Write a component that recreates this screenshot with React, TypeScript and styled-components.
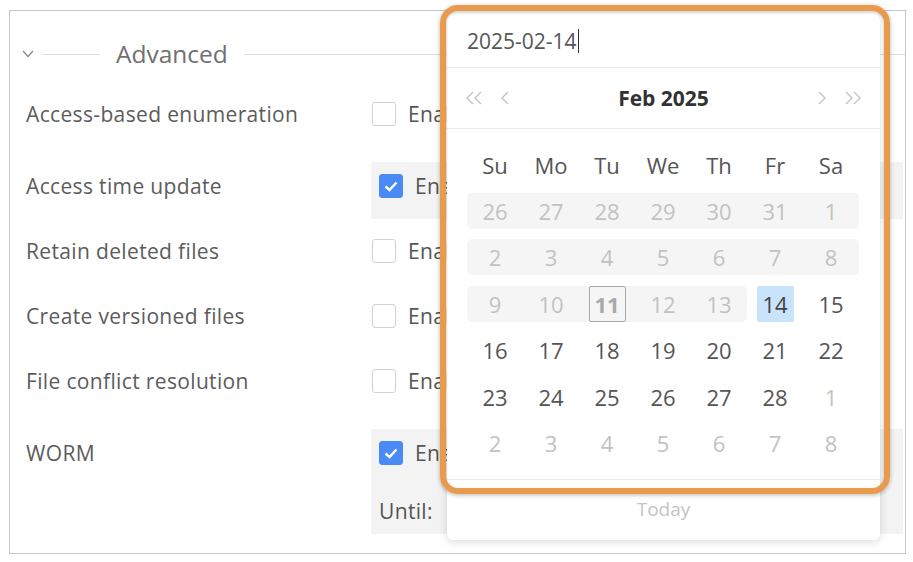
import React from 'react';
import styled, { createGlobalStyle, css } from 'styled-components';

const GlobalStyle = createGlobalStyle`
  html, body {
    margin: 0;
    padding: 0;
    background: #ffffff;
  }
  body {
    font-family: "Open Sans", "Noto Sans", sans-serif;
    color: #555555;
  }
`;

const Page = styled.div`
  position: relative;
  width: 913px;
  height: 562px;
  padding: 10px 0 0 9px;
  box-sizing: border-box;
  overflow: hidden;
`;

const Panel = styled.section`
  width: 897px;
  height: 544px;
  box-sizing: border-box;
  border: 1px solid #c6c6c6;
  padding-top: 29px;
`;

const SectionHeader = styled.div`
  display: flex;
  align-items: center;
  height: 28px;
  padding-left: 12px;
`;

const Rule = styled.div<{ $width?: number }>`
  height: 1px;
  background: #e2e2e2;
  ${({ $width }) =>
    $width
      ? css`
          width: ${$width}px;
        `
      : css`
          flex: 1;
        `}
`;

const SectionTitle = styled.span`
  font-size: 24.5px;
  color: #707070;
  margin: 0 16px;
  line-height: 28px;
`;

const Form = styled.div`
  display: flex;
  flex-direction: column;
  gap: 8px;
  padding: 22px 0 0 16px;
`;

const Row = styled.div<{ $spaced?: boolean }>`
  display: grid;
  grid-template-columns: 345px 1fr;
  margin-top: ${({ $spaced }) => ($spaced ? 7 : 0)}px;
`;

const Label = styled.div`
  font-size: 21px;
  letter-spacing: 0.35px;
  line-height: 24px;
  padding-top: 12px;
  color: #5c5c5c;
`;

const Control = styled.div<{ $active?: boolean }>`
  display: flex;
  flex-direction: column;
  margin-right: 2px;
  min-height: 57px;
  box-sizing: border-box;
  padding: ${({ $active }) => ($active ? '12px 8px 5px' : '12px 1px 5px')};
  background: ${({ $active }) => ($active ? '#f3f3f3' : 'transparent')};
`;

const CheckLine = styled.label`
  display: flex;
  align-items: center;
  gap: 12px;
  height: 24px;
  font-size: 21px;
  letter-spacing: 0.35px;
  color: #555555;
`;

const Box = styled.span<{ $checked?: boolean }>`
  width: 24px;
  height: 24px;
  box-sizing: border-box;
  border-radius: 3px;
  display: flex;
  align-items: center;
  justify-content: center;
  border: 1px solid ${({ $checked }) => ($checked ? '#4a8af4' : '#d3d3d3')};
  background: ${({ $checked }) => ($checked ? '#4a8af4' : '#ffffff')};
`;

const UntilLine = styled.div`
  display: flex;
  align-items: center;
  height: 36px;
  margin-top: 28px;
  font-size: 21px;
  letter-spacing: 0.35px;
  color: #555555;
`;

/* date picker dropdown */

const Popup = styled.div`
  position: absolute;
  left: 447px;
  top: 14px;
  width: 433px;
  height: 526px;
  background: #ffffff;
  border-radius: 6px;
  box-shadow: 0 2px 10px rgba(0, 0, 0, 0.14);
  display: flex;
  flex-direction: column;
`;

const DateInput = styled.div`
  height: 53px;
  display: flex;
  align-items: center;
  padding: 0 20px;
  font-size: 21px;
  color: #555555;
  border-bottom: 1px solid #ebebeb;
`;

const Caret = styled.span`
  width: 1px;
  height: 24px;
  background: #333333;
  margin-left: 1px;
`;

const MonthBar = styled.div`
  height: 60px;
  display: flex;
  align-items: center;
  justify-content: space-between;
  padding: 0 19px;
  border-bottom: 1px solid #ebebeb;
`;

const NavGroup = styled.div<{ $end?: boolean }>`
  display: flex;
  align-items: center;
  justify-content: ${({ $end }) => ($end ? 'flex-end' : 'flex-start')};
  gap: 19px;
  width: 60px;
`;

const MonthTitle = styled.div`
  font-size: 21px;
  font-weight: 700;
  color: #333333;
`;

const Days = styled.div`
  display: grid;
  grid-template-columns: repeat(7, 56px);
  grid-auto-rows: 46.4px;
  padding: 12.5px 20px 12.5px;
`;

const DayName = styled.div`
  display: flex;
  align-items: center;
  justify-content: center;
  font-size: 22px;
  color: #555555;
`;

const Cell = styled.div<{ $off?: boolean; $start?: boolean; $end?: boolean }>`
  height: 36px;
  align-self: center;
  display: flex;
  align-items: center;
  justify-content: center;
  background: ${({ $off }) => ($off ? '#f5f5f5' : 'transparent')};
  border-radius: ${({ $start, $end }) =>
    `${$start ? 5 : 0}px ${$end ? 5 : 0}px ${$end ? 5 : 0}px ${$start ? 5 : 0}px`};
`;

const DayNum = styled.span<{ $tone: 'normal' | 'muted'; $today?: boolean; $selected?: boolean }>`
  width: 37px;
  height: 36px;
  box-sizing: border-box;
  display: flex;
  align-items: center;
  justify-content: center;
  font-size: 22px;
  border-radius: 2px;
  color: ${({ $tone }) => ($tone === 'muted' ? '#c2c2c2' : '#555555')};
  ${({ $today }) =>
    $today &&
    css`
      border: 1.5px solid #a8a8a8;
      font-weight: 700;
      color: #a9a9a9;
    `}
  ${({ $selected }) =>
    $selected &&
    css`
      background: #c9e3fb;
      color: #444444;
    `}
`;

const Footer = styled.div`
  flex: 1;
  display: flex;
  align-items: center;
  justify-content: center;
  border-top: 1px solid #ebebeb;
  font-size: 19px;
  color: #c4c4c4;
  padding-bottom: 2px;
`;

const Highlight = styled.div`
  position: absolute;
  left: 440px;
  top: 5px;
  width: 450px;
  height: 489px;
  box-sizing: border-box;
  border: 6px solid #e99b4d;
  border-radius: 18px;
  box-shadow: 0 1px 4px rgba(0, 0, 0, 0.3), inset 0 1px 3px rgba(0, 0, 0, 0.2);
  pointer-events: none;
`;

const Spacer = styled.div<{ $w: number }>`
  width: ${({ $w }) => $w}px;
`;

const Chevron = ({ flip, double }: { flip?: boolean; double?: boolean }) => (
  <svg
    width={double ? 16 : 8}
    height={14}
    viewBox={double ? '0 0 16 14' : '0 0 8 14'}
    fill="none"
    stroke="#c4c4c4"
    strokeWidth={1.4}
    style={{ transform: flip ? 'scaleX(-1)' : undefined }}
  >
    <polyline points="7,1 1,7 7,13" />
    {double && <polyline points="15,1 9,7 15,13" />}
  </svg>
);

const Tick = () => (
  <svg width="14" height="11" viewBox="0 0 14 11" fill="none" stroke="#ffffff" strokeWidth={2.4}>
    <polyline points="1.5,5.5 5.5,9 12.5,1.5" />
  </svg>
);

const settings = [
  { label: 'Access-based enumeration', checked: false },
  { label: 'Access time update', checked: true },
  { label: 'Retain deleted files', checked: false },
  { label: 'Create versioned files', checked: false },
  { label: 'File conflict resolution', checked: false },
];

type Day = { n: number; inMonth: boolean };

// Feb 2025 starts on a Saturday
const buildMonth = (): Day[] => {
  const out: Day[] = [];
  for (let n = 26; n <= 31; n++) out.push({ n, inMonth: false });
  for (let n = 1; n <= 28; n++) out.push({ n, inMonth: true });
  for (let n = 1; n <= 8; n++) out.push({ n, inMonth: false });
  return out;
};

const SELECTED = 14;
const TODAY = 11;

const isOff = (d: Day, i: number) => i < 6 || (d.inMonth && d.n < SELECTED);

const App: React.FC = () => {
  const days = buildMonth();

  return (
    <Page>
      <GlobalStyle />
      <Panel>
        <SectionHeader>
          <svg width="12" height="8" viewBox="0 0 12 8" fill="none" stroke="#8a8a8a" strokeWidth={1.3}>
            <polyline points="1,1 6,6.5 11,1" />
          </svg>
          <Spacer $w={8} />
          <Rule $width={58} />
          <SectionTitle>Advanced</SectionTitle>
          <Rule />
        </SectionHeader>

        <Form>
          {settings.map((s) => (
            <Row key={s.label} $spaced={s.checked}>
              <Label>{s.label}</Label>
              <Control $active={s.checked}>
                <CheckLine>
                  <Box $checked={s.checked}>{s.checked && <Tick />}</Box>
                  Enable
                </CheckLine>
              </Control>
            </Row>
          ))}
          <Row $spaced>
            <Label>WORM</Label>
            <Control $active>
              <CheckLine>
                <Box $checked>
                  <Tick />
                </Box>
                Enable
              </CheckLine>
              <UntilLine>Until:</UntilLine>
            </Control>
          </Row>
        </Form>
      </Panel>

      <Popup>
        <DateInput>
          2025-02-14
          <Caret />
        </DateInput>
        <MonthBar>
          <NavGroup>
            <Chevron double />
            <Chevron />
          </NavGroup>
          <MonthTitle>Feb 2025</MonthTitle>
          <NavGroup $end>
            <Chevron flip />
            <Chevron flip double />
          </NavGroup>
        </MonthBar>
        <Days>
          {['Su', 'Mo', 'Tu', 'We', 'Th', 'Fr', 'Sa'].map((d) => (
            <DayName key={d}>{d}</DayName>
          ))}
          {days.map((d, i) => {
            const off = isOff(d, i);
            const col = i % 7;
            const prevOff = col > 0 && isOff(days[i - 1], i - 1);
            const nextOff = col < 6 && isOff(days[i + 1], i + 1);
            const current = d.inMonth;
            return (
              <Cell key={i} $off={off} $start={off && !prevOff} $end={off && !nextOff}>
                <DayNum
                  $tone={off || !current ? 'muted' : 'normal'}
                  $today={current && d.n === TODAY}
                  $selected={current && d.n === SELECTED}
                >
                  {d.n}
                </DayNum>
              </Cell>
            );
          })}
        </Days>
        <Footer>Today</Footer>
      </Popup>

      <Highlight />
    </Page>
  );
};

export default App;
